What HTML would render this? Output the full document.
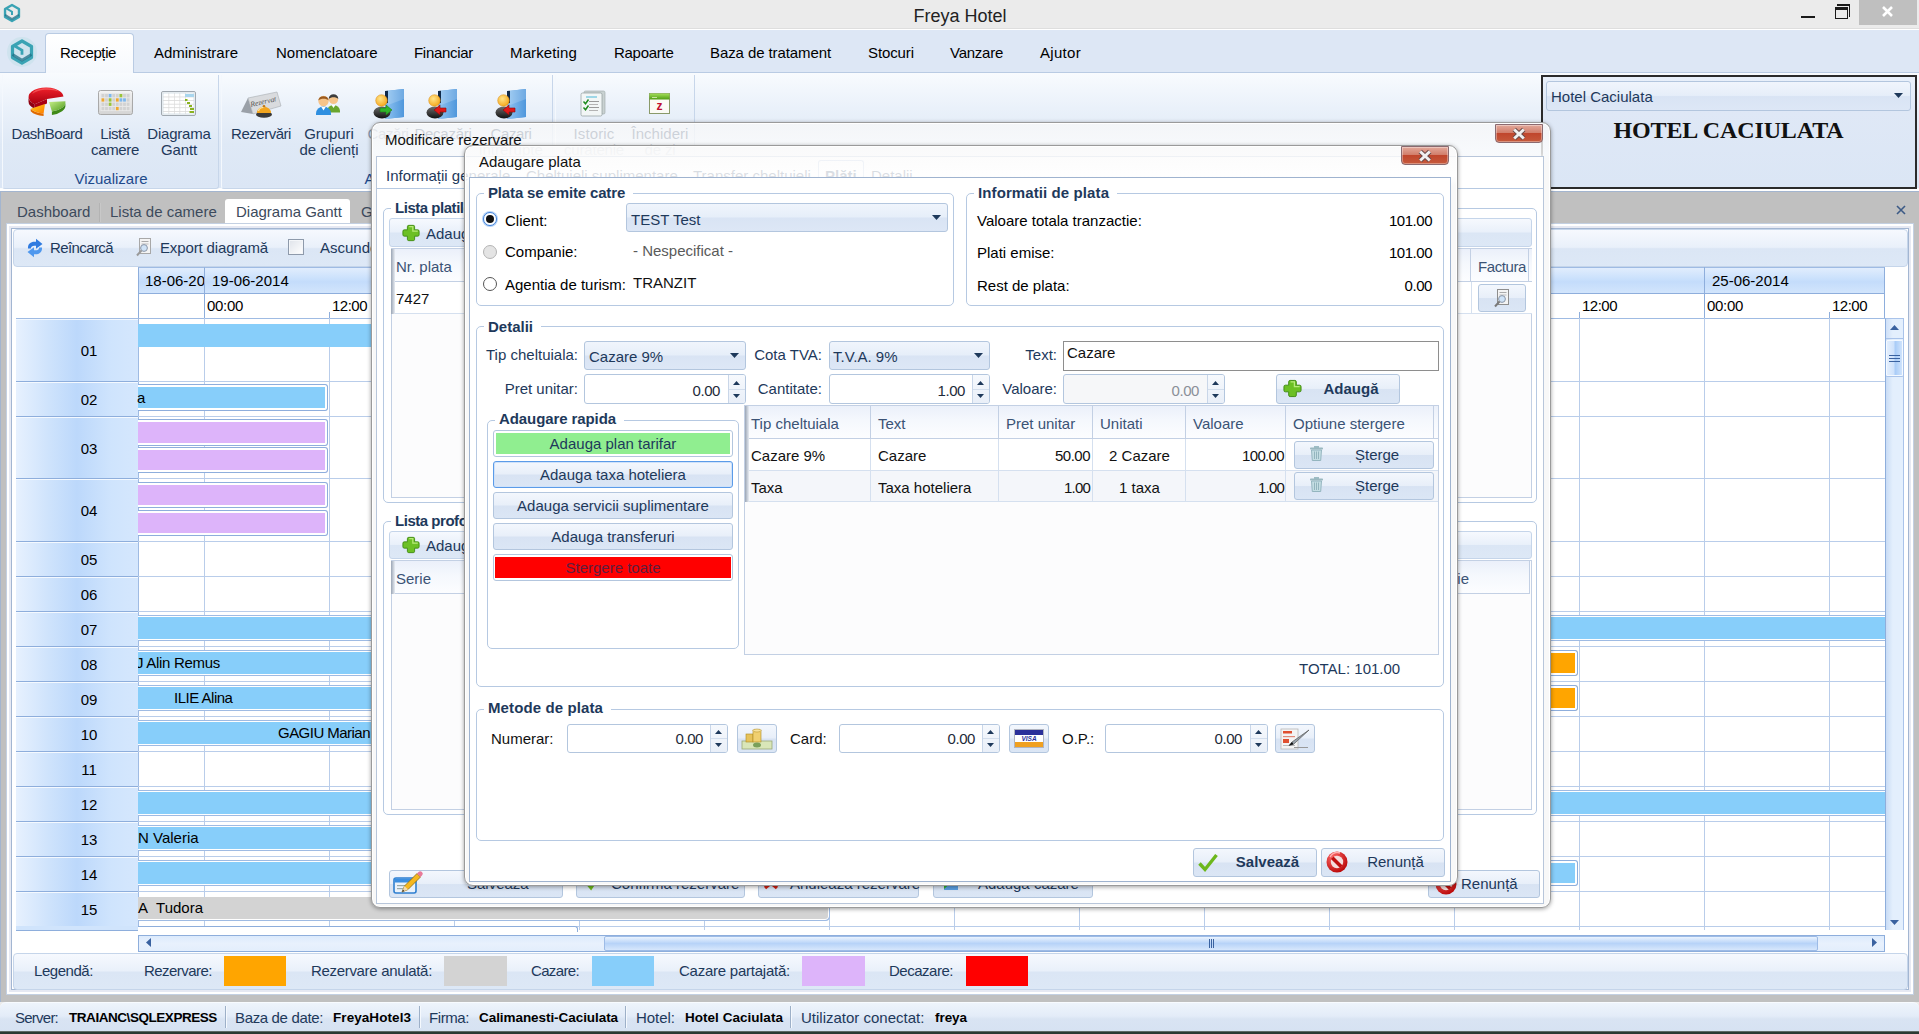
<!DOCTYPE html>
<html lang="ro"><head><meta charset="utf-8"><title>Freya Hotel</title>
<style>
*{box-sizing:border-box;margin:0;padding:0}
html,body{width:1919px;height:1034px;overflow:hidden;background:#ebebeb}
body{font:15px "Liberation Sans",sans-serif;color:#000;position:relative}
.a{position:absolute;white-space:nowrap}
.t{position:absolute;white-space:nowrap;line-height:18px;height:18px}
.nv{color:#1e395b}
.b{font-weight:bold}
.c{text-align:center}
.r{text-align:right}
svg{position:absolute;overflow:visible}
/* title */
#title{left:0;top:0;width:1919px;height:29px;background:#ebebeb}
#menu{left:0;top:29px;width:1919px;height:44px;background:#dde7f5;border-top:1px solid #fff;border-bottom:1px solid #b9cbe3}
#ribbon{left:0;top:73px;width:1919px;height:118px;background:linear-gradient(#f8fbfe 0,#eaf1fa 30%,#dfe9f6 60%,#dbe6f5 97%,#fff 98%)}
.rg{top:75px;height:113px;border:1px solid #c7d6ea;border-left-color:#f4f8fd;border-top:none;border-radius:0 0 3px 3px}
.rl{top:126px;line-height:16px;text-align:center;color:#1e395b}
.gl{top:170px;line-height:18px;text-align:center;color:#1e4a8b}
#gray{left:0;top:191px;width:1919px;height:811px;background:#c0c0c0;border-top:1px solid #a3b5cf;border-left:1px solid #a3b5cf}
.dt{top:202px;height:21px;line-height:19px;color:#3c4a5c}
#panel{left:6px;top:223px;width:1908px;height:772px;background:#fff;border:1px solid #c3d0e2}
.tb{border:1px solid #c5d5ea;border-radius:4px;background:linear-gradient(#f6f9fe 0,#e9f0fa 48%,#dbe6f5 52%,#dde8f6 100%)}
.hd{background:linear-gradient(#e1edfd 0,#c9e0fc 45%,#c4dcfb 55%,#d2e5fc 100%);border:1px solid #8eaedc;border-top-color:#9fbbe3}
.rowl{left:16px;width:122px;background:linear-gradient(90deg,#e7f1fe 0,#d0e4fc 25%,#bcd8fb 50%,#cfe4fd 78%,#d5e7fd 100%);border-top:1px solid #f4f9ff;border-bottom:1px solid #8eaedc;text-align:center}
.gv{width:1px;background:#b4cbea;top:318px;height:612px}
.gh{height:1px;background:#b4cbea;left:138px;width:1747px}
.bar{height:22px}
.bb{border:1px solid #8eaedc;border-radius:3px;padding:0;box-shadow:inset 0 0 0 2px #fff}
.sky{background:#87cefa}.pur{background:#ddb4fa}.org{background:#ffa500}.lgr{background:#d3d3d3}.red{background:#f00}
#status{left:0;top:1002px;width:1919px;height:30px;background:linear-gradient(#eef4fc 0,#e3ecf8 45%,#d9e4f3 55%,#d6e2f2 100%);border-top:1px solid #f8fbff;border-radius:6px 6px 0 0}
.st{top:1009px;color:#1e395b}
.sb{top:1010px;font:bold 13.5px "Liberation Sans",sans-serif;color:#000}
.ss{top:1006px;width:1px;height:22px;background:#9db0c8;border-right:1px solid #f5f9fe;box-sizing:content-box}
/* dialogs */
.glass{border-radius:9px;border:1px solid #9a9a9a;background:linear-gradient(#f4f4f4,#fcfcfc 30px,#f7f7f7);box-shadow:0 1px 4px rgba(0,0,0,.38),inset 0 0 0 1px #fff}
.dlgc{background:#fff;border:1px solid #9fb3cf}
.grp{border:1px solid #b6c9e2;border-radius:5px}
.gt{font-weight:bold;color:#1e395b;background:#fff;padding:0 8px 0 4px;line-height:18px}
.cb{border:1px solid #b3c6de;border-radius:3px;background:linear-gradient(#f0f5fc 0,#e6eef9 48%,#d9e4f4 52%,#dde7f6 100%)}
.in{border:1px solid #b3c6de;border-radius:3px;background:#fff}
.btn{border:1px solid #b3c6de;border-radius:3px;background:linear-gradient(#f3f7fd 0,#e8eff9 48%,#d8e3f3 52%,#dbe6f5 100%);color:#1e395b;text-align:center}
.gh2{background:linear-gradient(#ebf0fa 0,#f5f8fd 45%,#fcfdff 100%);color:#3b5375;border-right:1px solid #c3d0e4;border-bottom:1px solid #c3d0e4}
.xbtn{border:1px solid #8a6a70;border-radius:0 0 4px 4px;background:linear-gradient(#e3a99b 0,#d27f6c 45%,#c0462d 50%,#c65a3c 100%);box-shadow:inset 0 0 0 1px rgba(255,255,255,.35)}
</style></head>
<body>
<div class="a " style="left:0px;top:0px;width:1919px;height:29px;background:#ebebeb"></div>
<svg style="left:1px;top:2px" width="22" height="22" viewBox="0 0 24 24"><path d="M12 3.2 L19.6 7.6 V16.4 L12 20.8 L4.4 16.4 V7.6 Z" fill="none" stroke="#3aa3b4" stroke-width="2.6" stroke-linejoin="round"/><path d="M6.2 7.2 L12 10.6 V14.2" fill="none" stroke="#3aa3b4" stroke-width="2.2"/><path d="M4.4 14 L12 18.6 L19.6 14" fill="none" stroke="#1f6f86" stroke-width="2.2" opacity=".75"/></svg>
<div class="t c" style="left:760px;top:6px;width:400px;font-size:18px;line-height:20px;height:20px;color:#222">Freya Hotel</div>
<div class="a " style="left:1859px;top:0px;width:58px;height:25px;background:#bfbfbf"></div>
<div class="a " style="left:1801px;top:16px;width:14px;height:2px;background:#1a1a1a"></div>
<svg style="left:1835px;top:4px" width="16" height="16" viewBox="0 0 16 16"><rect x="2" y="0" width="13" height="2" fill="#1a1a1a"/><rect x="14" y="0" width="1" height="13" fill="#1a1a1a"/><rect x=".5" y="4.500" width="12" height="10" fill="#ebebeb" stroke="#1a1a1a" stroke-width="1"/><rect x="0" y="3" width="13" height="3" fill="#1a1a1a"/></svg>
<svg style="left:1882px;top:7px" width="11" height="9" viewBox="0 0 11 9"><path d="M1 0L10 9M10 0L1 9" stroke="#fff" stroke-width="2.600"/></svg>
<div class="a " style="left:0px;top:28px;width:1919px;height:1px;background:#dedede"></div>
<div class="a" id="menu"></div>
<svg style="left:7px;top:37px" width="30" height="30" viewBox="0 0 24 24"><circle cx="12" cy="12" r="12" fill="#cfe3ee"/><path d="M12 3.2 L19.6 7.6 V16.4 L12 20.8 L4.4 16.4 V7.6 Z" fill="none" stroke="#3aa3b4" stroke-width="2.6" stroke-linejoin="round"/><path d="M6.2 7.2 L12 10.6 V14.2" fill="none" stroke="#3aa3b4" stroke-width="2.2"/><path d="M4.4 14 L12 18.6 L19.6 14" fill="none" stroke="#1f6f86" stroke-width="2.2" opacity=".75"/></svg>
<div class="a " style="left:45px;top:33px;width:89px;height:40px;background:linear-gradient(#fff,#f6f9fd);border:1px solid #b9cbe3;border-bottom:none;border-radius:4px 4px 0 0"></div>
<div class="t " style="left:60px;top:44px;letter-spacing:-0.40px;">Recepție</div>
<div class="t " style="left:154px;top:44px;letter-spacing:-0.02px;">Administrare</div>
<div class="t " style="left:276px;top:44px;letter-spacing:-0.02px;">Nomenclatoare</div>
<div class="t " style="left:414px;top:44px;letter-spacing:-0.30px;">Financiar</div>
<div class="t " style="left:510px;top:44px;letter-spacing:0.13px;">Marketing</div>
<div class="t " style="left:614px;top:44px;letter-spacing:-0.28px;">Rapoarte</div>
<div class="t " style="left:710px;top:44px;letter-spacing:-0.09px;">Baza de tratament</div>
<div class="t " style="left:868px;top:44px;letter-spacing:-0.10px;">Stocuri</div>
<div class="t " style="left:950px;top:44px;letter-spacing:-0.25px;">Vanzare</div>
<div class="t " style="left:1040px;top:44px;letter-spacing:0.30px;">Ajutor</div>
<div class="a" id="ribbon"></div>
<div class="a rg" style="left:2px;top:75px;width:217px;height:114px;"></div>
<div class="a rg" style="left:221px;top:75px;width:332px;height:114px;"></div>
<div class="a rg" style="left:555px;top:75px;width:140px;height:114px;"></div>
<div class="a rl" style="left:-3px;width:100px"><span style="letter-spacing:-0.45px;">DashBoard</span></div>
<div class="a rl" style="left:65px;width:100px"><span style="letter-spacing:-0.42px;">Listă</span><br><span style="letter-spacing:-0.34px;">camere</span></div>
<div class="a rl" style="left:129px;width:100px"><span style="letter-spacing:-0.22px;">Diagrama</span><br><span style="letter-spacing:-0.14px;">Gantt</span></div>
<div class="a rl" style="left:211px;width:100px"><span style="letter-spacing:-0.49px;">Rezervări</span></div>
<div class="a rl" style="left:279px;width:100px"><span style="letter-spacing:-0.09px;">Grupuri</span><br><span style="letter-spacing:-0.02px;">de clienți</span></div>
<div class="a rl" style="left:338px;width:100px;opacity:0.45"><span style="letter-spacing:-0.39px;">Cazări</span></div>
<div class="a rl" style="left:393px;width:100px"><span style="letter-spacing:-0.27px;">Decazări</span></div>
<div class="a rl" style="left:461px;width:100px"><span style="letter-spacing:-0.39px;">Cazari</span><br><span style="letter-spacing:0.06px;">intrerupte</span></div>
<div class="a rl" style="left:544px;width:100px"><span style="letter-spacing:0.14px;">Istoric</span><br><span style="letter-spacing:-0.19px;">curatenie</span></div>
<div class="a rl" style="left:610px;width:100px"><span style="letter-spacing:0.03px;">Închideri</span><br><span style="letter-spacing:-0.14px;">de zi</span></div>
<div class="a gl" style="left:11px;width:200px">Vizualizare</div>
<div class="a gl" style="left:287px;width:200px">Acțiuni</div>
<svg style="left:0px;top:0px" width="0" height="0" viewBox="0 0 0 0"><defs>
<linearGradient id="gR" x1="0" y1="0" x2="0" y2="1"><stop offset="0" stop-color="#f0202a"/><stop offset="1" stop-color="#a80010"/></linearGradient>
<linearGradient id="gG" x1="0" y1="0" x2="1" y2="1"><stop offset="0" stop-color="#c8ef8a"/><stop offset="1" stop-color="#4c9a1c"/></linearGradient>
<linearGradient id="gY" x1="0" y1="0" x2="1" y2="1"><stop offset="0" stop-color="#ffd21a"/><stop offset="1" stop-color="#ff7a00"/></linearGradient>
<linearGradient id="gD" x1="0" y1="0" x2="1" y2="0"><stop offset="0" stop-color="#86bdee"/><stop offset="1" stop-color="#4f97dc"/></linearGradient>
<radialGradient id="gH" cx=".4" cy=".35" r=".7"><stop offset="0" stop-color="#ffe58a"/><stop offset="1" stop-color="#f5a417"/></radialGradient>
<linearGradient id="gB" x1="0" y1="0" x2="0" y2="1"><stop offset="0" stop-color="#6e6e6e"/><stop offset="1" stop-color="#111"/></linearGradient>
<linearGradient id="gP" x1="0" y1="0" x2="0" y2="1"><stop offset="0" stop-color="#f4f4f4"/><stop offset="1" stop-color="#d4d4d4"/></linearGradient>
<linearGradient id="gX" x1="0" y1="0" x2="0" y2="1"><stop offset="0" stop-color="#a4e05a"/><stop offset="1" stop-color="#4f9d14"/></linearGradient>
<radialGradient id="gN" cx=".35" cy=".3" r=".8"><stop offset="0" stop-color="#ff6a6a"/><stop offset="1" stop-color="#b40000"/></radialGradient>
</defs></svg>
<svg style="left:28px;top:86px" width="38" height="31" viewBox="0 0 38 31"><path d="M.5 11v4.500A17.500 9.500 0 0 0 6.750 22.800v-4.500A17.500 9.500 0 0 1 .5 11Z" fill="#8e0010"/><path d="M6.750 18.300L19 13v4.500L6.750 22.800Z" fill="#a80014"/><path d="M19 13L6.750 18.300A17.500 9.500 0 1 1 35.500 10.500Z" fill="url(#gR)"/><path d="M4 8A15 7.500 0 0 1 31 5.500A20 11 0 0 0 4 8Z" fill="#ff8080" opacity=".5"/><path d="M37.400 15.200v3.500A16.500 9.500 0 0 1 23.900 28.900v-3.500A16.500 9.500 0 0 0 37.400 15.200Z" fill="#3f8a18"/><path d="M21 16L37.400 15.200A16.500 9.500 0 0 1 23.900 25.400Z" fill="url(#gG)"/><path d="M2.700 22.750v2.500A16.500 9.500 0 0 0 15.600 30v-2.500A16.500 9.500 0 0 1 2.700 22.750Z" fill="#e06a00"/><path d="M17 18L15.600 27.500A16.500 9.500 0 0 1 2.700 22.750Z" fill="url(#gY)"/></svg>
<svg style="left:98px;top:90px" width="35" height="25" viewBox="0 0 35 25"><rect x=".5" y=".5" width="34" height="24" rx="2" fill="url(#gP)" stroke="#a9a9a9"/><rect x="2.5" y="3" width="30" height="18" fill="#e9e9e9"/><rect x="3.5" y="4.0" width="2.8" height="3.3" fill="#d2d2d2"/><rect x="7.1" y="4.0" width="2.8" height="3.3" fill="#d2d2d2"/><rect x="10.7" y="4.0" width="2.8" height="3.3" fill="#7db7ee"/><rect x="14.3" y="4.0" width="2.8" height="3.3" fill="#d2d2d2"/><rect x="17.9" y="4.0" width="2.8" height="3.3" fill="#d2d2d2"/><rect x="21.5" y="4.0" width="2.8" height="3.3" fill="#9ac43a"/><rect x="25.1" y="4.0" width="2.8" height="3.3" fill="#d2d2d2"/><rect x="28.7" y="4.0" width="2.8" height="3.3" fill="#d2d2d2"/><rect x="3.5" y="8.3" width="2.8" height="3.3" fill="#f0a830"/><rect x="7.1" y="8.3" width="2.8" height="3.3" fill="#d2d2d2"/><rect x="10.7" y="8.3" width="2.8" height="3.3" fill="#9ac43a"/><rect x="14.3" y="8.3" width="2.8" height="3.3" fill="#d2d2d2"/><rect x="17.9" y="8.3" width="2.8" height="3.3" fill="#f0a830"/><rect x="21.5" y="8.3" width="2.8" height="3.3" fill="#7db7ee"/><rect x="25.1" y="8.3" width="2.8" height="3.3" fill="#7db7ee"/><rect x="28.7" y="8.3" width="2.8" height="3.3" fill="#d2d2d2"/><rect x="3.5" y="12.6" width="2.8" height="3.3" fill="#d2d2d2"/><rect x="7.1" y="12.6" width="2.8" height="3.3" fill="#d2d2d2"/><rect x="10.7" y="12.6" width="2.8" height="3.3" fill="#9ac43a"/><rect x="14.3" y="12.6" width="2.8" height="3.3" fill="#d2d2d2"/><rect x="17.9" y="12.6" width="2.8" height="3.3" fill="#d2d2d2"/><rect x="21.5" y="12.6" width="2.8" height="3.3" fill="#d2d2d2"/><rect x="25.1" y="12.6" width="2.8" height="3.3" fill="#d2d2d2"/><rect x="28.7" y="12.6" width="2.8" height="3.3" fill="#d2d2d2"/><rect x="3.5" y="16.9" width="2.8" height="3.3" fill="#d2d2d2"/><rect x="7.1" y="16.9" width="2.8" height="3.3" fill="#d2d2d2"/><rect x="10.7" y="16.9" width="2.8" height="3.3" fill="#d2d2d2"/><rect x="14.3" y="16.9" width="2.8" height="3.3" fill="#d2d2d2"/><rect x="17.9" y="16.9" width="2.8" height="3.3" fill="#f0a830"/><rect x="21.5" y="16.9" width="2.8" height="3.3" fill="#d2d2d2"/><rect x="25.1" y="16.9" width="2.8" height="3.3" fill="#d2d2d2"/><rect x="28.7" y="16.9" width="2.8" height="3.3" fill="#d2d2d2"/></svg>
<svg style="left:161px;top:91px" width="35" height="25" viewBox="0 0 35 25"><rect x=".5" y=".5" width="34" height="24" rx="1.5" fill="#f7f7f7" stroke="#a0a8b0"/><rect x="2" y="2" width="31" height="21" fill="#fff" stroke="#bcd0dc" stroke-width=".6"/><rect x="2" y="5.6" width="31" height=".7" fill="#d4d4d4"/><rect x="2" y="9.2" width="31" height=".7" fill="#d4d4d4"/><rect x="2" y="12.8" width="31" height=".7" fill="#d4d4d4"/><rect x="2" y="16.4" width="31" height=".7" fill="#d4d4d4"/><rect x="2" y="20.0" width="31" height=".7" fill="#d4d4d4"/><rect x="7.5" y="2" width=".7" height="21" fill="#dcdcdc"/><rect x="13.0" y="2" width=".7" height="21" fill="#dcdcdc"/><rect x="18.5" y="2" width=".7" height="21" fill="#dcdcdc"/><rect x="24.0" y="2" width=".7" height="21" fill="#dcdcdc"/><rect x="24" y="3" width="9" height="3" fill="#a9d6ee"/><rect x="24" y="8" width="2.5" height="2" fill="#8ab320"/><rect x="26" y="11" width="3" height="2" fill="#8ab320"/><rect x="28" y="14" width="3" height="2" fill="#8ab320"/><rect x="29" y="17" width="4" height="2" fill="#8ab320"/><rect x="28.5" y="20" width="4.5" height="2" fill="#8ab320"/></svg>
<svg style="left:241px;top:92px" width="40" height="26" viewBox="0 0 40 26"><path d="M0 20L7 6L12 22Z" fill="#9aa0a8"/><path d="M7 6L36 0L40 14L12 22Z" fill="#d9dbde" stroke="#a8acb2" stroke-width=".6"/><text x="10" y="15" font-family="Liberation Serif,serif" font-style="italic" font-size="7.5" fill="#555" transform="rotate(-13 10 15)">Rezervat</text><ellipse cx="23" cy="22.5" rx="8" ry="3.3" fill="#3a3a3a"/><path d="M16 21a7 6.2 0 0 1 14 0Z" fill="#f2a51e"/><path d="M17.5 19a5.5 4.5 0 0 1 6-3.6" stroke="#ffe39a" stroke-width="1.2" fill="none"/><circle cx="23" cy="14.2" r="1.3" fill="#c47a10"/></svg>
<svg style="left:315px;top:91px" width="27" height="24" viewBox="0 0 27 24"><path d="M12 20a6.5 6 0 0 1 13 0v1.5H12Z" fill="#6aa62e"/><circle cx="18.5" cy="8.5" r="4.6" fill="#f6c48a"/><path d="M13.7 8a4.8 4.8 0 0 1 9.6 0c-2 -2 -7 -2.4-9.6 0Z" fill="#3d3d3d"/><path d="M16.5 14l2 3 2-3Z" fill="#fff"/><path d="M1 22.5a7.5 7 0 0 1 15 0v1.5H1Z" fill="#2f8fe0"/><circle cx="8.5" cy="10" r="5.2" fill="#f6c48a"/><path d="M3.2 9.6a5.4 5.4 0 0 1 10.6 0c-2.4-2.6-8-2.6-10.6 0Z" fill="#9a5a1e"/><path d="M6.3 16l2.2 3.5 2.2-3.5Z" fill="#fff"/></svg>
<svg style="left:373px;top:89px" width="33" height="30" viewBox="0 0 33 30"><path d="M12 2L31 0V28L12 30Z" fill="url(#gD)"/><path d="M12 2L15 1.700V14L12 14Z" fill="#0f2a4a"/><path d="M15 1.700L31 0V28L15 29.700Z" fill="url(#gD)"/><path d="M15 1.700L31 0V10L15 16Z" fill="#fff" opacity=".18"/><ellipse cx="9" cy="23.500" rx="8.500" ry="6" fill="url(#gB)"/><circle cx="8.500" cy="11.500" r="5.800" fill="url(#gH)" stroke="#d98a10" stroke-width=".5"/><path d="M7 19h6v-3l6 5-6 5v-3H7z" fill="#2fb52a" stroke="#1c7a18" stroke-width=".6"/></svg>
<svg style="left:426px;top:89px" width="33" height="30" viewBox="0 0 33 30"><path d="M12 2L31 0V28L12 30Z" fill="url(#gD)"/><path d="M12 2L15 1.700V14L12 14Z" fill="#0f2a4a"/><path d="M15 1.700L31 0V28L15 29.700Z" fill="url(#gD)"/><path d="M15 1.700L31 0V10L15 16Z" fill="#fff" opacity=".18"/><ellipse cx="9" cy="23.500" rx="8.500" ry="6" fill="url(#gB)"/><circle cx="8.500" cy="11.500" r="5.800" fill="url(#gH)" stroke="#d98a10" stroke-width=".5"/><path d="M20 19h-6v-3l-6 5 6 5v-3h6z" fill="#e01818" stroke="#8a0c0c" stroke-width=".6"/></svg>
<svg style="left:495px;top:89px" width="33" height="30" viewBox="0 0 33 30"><path d="M12 2L31 0V28L12 30Z" fill="url(#gD)"/><path d="M12 2L15 1.700V14L12 14Z" fill="#0f2a4a"/><path d="M15 1.700L31 0V28L15 29.700Z" fill="url(#gD)"/><path d="M15 1.700L31 0V10L15 16Z" fill="#fff" opacity=".18"/><ellipse cx="9" cy="23.500" rx="8.500" ry="6" fill="url(#gB)"/><circle cx="8.500" cy="11.500" r="5.800" fill="url(#gH)" stroke="#d98a10" stroke-width=".5"/><path d="M20 19h-6v-3l-6 5 6 5v-3h6z" fill="#e01818" stroke="#8a0c0c" stroke-width=".6"/></svg>
<svg style="left:580px;top:90px" width="26" height="27" viewBox="0 0 26 27"><rect x="4" y="1" width="21" height="23" rx="1.5" fill="#c9d2d2" stroke="#9aa6a6" stroke-width=".6"/><rect x="1" y="3" width="21" height="23" rx="1.5" fill="#f2f6f6" stroke="#8f9b9b" stroke-width=".7"/><rect x="6" y="6.5" width="11" height="1" fill="#4ab8d8"/><rect x="9" y="11" width="10" height="1" fill="#9a9a9a"/><rect x="9" y="14" width="9" height="1" fill="#b4b4b4"/><rect x="9" y="17" width="10" height="1" fill="#9a9a9a"/><rect x="9" y="20" width="9" height="1" fill="#b4b4b4"/><path d="M3.5 11.5l2 2.2 3-4.2" stroke="#1d8a1d" stroke-width="1.5" fill="none"/><path d="M3.5 17.5l2 2.2 3-4.2" stroke="#1d8a1d" stroke-width="1.5" fill="none"/></svg>
<svg style="left:649px;top:93px" width="21" height="21" viewBox="0 0 21 21"><rect x=".5" y=".5" width="20" height="20" fill="#fbfbf6" stroke="#8a9a6a"/><rect x=".5" y=".5" width="20" height="6" fill="url(#gX)"/><rect x="3" y="4" width="5" height=".8" fill="#dff0c0"/><text x="10.5" y="17" text-anchor="middle" font-family="Liberation Sans,sans-serif" font-weight="bold" font-size="12" fill="#c01030">z</text></svg>
<div class="a " style="left:1541px;top:75px;width:376px;height:114px;border:2px solid #2b2b2b;background:linear-gradient(#e9f0fa,#dfe8f6 30%,#dbe6f5)"></div>
<div class="a cb" style="left:1546px;top:81px;width:365px;height:30px;"></div>
<div class="t nv" style="left:1551px;top:88px;">Hotel Caciulata</div>
<svg style="left:1894px;top:93px" width="9" height="5"><path d="M0 0H9L4.5 5Z" fill="#1e395b"/></svg>
<div class="t c" style="left:1541px;top:117px;width:375px;font:bold 24px/26px Liberation Serif,serif;height:26px;color:#111;letter-spacing:-0.12px;">HOTEL CACIULATA</div>
<div class="a" id="gray"></div>
<div class="a " style="left:225px;top:199px;width:125px;height:25px;background:#fff;border-radius:3px 3px 0 0"></div>
<div class="t dt" style="left:17px;top:202px;">Dashboard</div>
<div class="a " style="left:99px;top:203px;width:1px;height:19px;background:#b3b3b3;border-right:1px solid #c8c8c8;box-sizing:content-box"></div>
<div class="t dt" style="left:110px;top:202px;">Lista de camere</div>
<div class="t dt" style="left:236px;top:202px;">Diagrama Gantt</div>
<div class="t dt" style="left:361px;top:202px;">Grupuri</div>
<svg style="left:1896px;top:205px" width="10" height="10"><path d="M1 1L9 9M9 1L1 9" stroke="#3c5a86" stroke-width="1.6"/></svg>
<div class="a" id="panel"></div>
<div class="a " style="left:9px;top:226px;width:1902px;height:766px;border:2px solid #e6e9f3"></div>
<div class="a " style="left:11px;top:228px;width:1898px;height:762px;border:1px solid #a3b6d2"></div>
<div class="a tb" style="left:13px;top:229px;width:1895px;height:38px;"></div>
<svg style="left:27px;top:238px" width="16" height="20" viewBox="0 0 16 20"><path d="M1 10.500C.5 5 5 3 9 3.800V.8L15.500 6L9 10.800V7.800C6 7.200 4 8.200 3.800 10.500Z" fill="#2f7be0"/><path d="M15 9.500C15.500 15 11 17 7 16.200V19.200L.5 14L7 9.200V12.200C10 12.800 12 11.800 12.200 9.500Z" fill="#4f98ee"/></svg>
<div class="t nv" style="left:50px;top:239px;letter-spacing:-0.60px;">Reîncarcă</div>
<svg style="left:136px;top:238px" width="16" height="19" viewBox="0 0 16 19"><rect x="3.5" y=".5" width="11" height="15" fill="#f4f4f4" stroke="#a8a8a8"/><rect x="5.5" y="3" width="7" height="1" fill="#aaa"/><rect x="5.5" y="5.5" width="7" height="1" fill="#bbb"/><circle cx="8" cy="10" r="3.4" fill="#cfe3f7" stroke="#8a96a8" stroke-width="1"/><path d="M5.5 12.5L1 17.5" stroke="#9a9a9a" stroke-width="2"/></svg>
<div class="t nv" style="left:160px;top:239px;letter-spacing:-0.14px;">Export diagramă</div>
<div class="a " style="left:288px;top:239px;width:16px;height:16px;border:1px solid #8e9aab;background:linear-gradient(135deg,#dfe3ea,#fff);box-shadow:inset 0 0 0 1px #f4f6f9"></div>
<div class="t nv" style="left:320px;top:239px;">Ascunde</div>
<div class="a hd" style="left:138px;top:267px;width:67px;height:27px;"></div>
<div class="a hd" style="left:204px;top:267px;width:1681px;height:27px;"></div>
<div class="t " style="left:145px;top:272px;width:59px;overflow:hidden">18-06-20</div>
<div class="t " style="left:212px;top:272px;">19-06-2014</div>
<div class="a " style="left:1704px;top:267px;width:1px;height:27px;background:#8eaedc"></div>
<div class="t " style="left:1712px;top:272px;">25-06-2014</div>
<div class="a " style="left:138px;top:293px;width:1px;height:25px;background:#8eaedc"></div>
<div class="a " style="left:1884px;top:293px;width:1px;height:25px;background:#8eaedc"></div>
<div class="a " style="left:16px;top:318px;width:1869px;height:1px;background:#9fbbe3"></div>
<div class="a " style="left:204px;top:293px;width:1px;height:25px;background:#8eaedc"></div>
<div class="t " style="left:207px;top:297px;letter-spacing:-0.31px;">00:00</div>
<div class="a " style="left:329px;top:312px;width:1px;height:6px;background:#8eaedc"></div>
<div class="t " style="left:332px;top:297px;letter-spacing:-0.51px;">12:00</div>
<div class="a " style="left:454px;top:293px;width:1px;height:25px;background:#8eaedc"></div>
<div class="a " style="left:579px;top:312px;width:1px;height:6px;background:#8eaedc"></div>
<div class="a " style="left:704px;top:293px;width:1px;height:25px;background:#8eaedc"></div>
<div class="a " style="left:829px;top:312px;width:1px;height:6px;background:#8eaedc"></div>
<div class="a " style="left:954px;top:293px;width:1px;height:25px;background:#8eaedc"></div>
<div class="a " style="left:1079px;top:312px;width:1px;height:6px;background:#8eaedc"></div>
<div class="a " style="left:1204px;top:293px;width:1px;height:25px;background:#8eaedc"></div>
<div class="a " style="left:1329px;top:312px;width:1px;height:6px;background:#8eaedc"></div>
<div class="a " style="left:1454px;top:293px;width:1px;height:25px;background:#8eaedc"></div>
<div class="a " style="left:1579px;top:312px;width:1px;height:6px;background:#8eaedc"></div>
<div class="t " style="left:1582px;top:297px;letter-spacing:-0.51px;">12:00</div>
<div class="a " style="left:1704px;top:293px;width:1px;height:25px;background:#8eaedc"></div>
<div class="t " style="left:1707px;top:297px;letter-spacing:-0.31px;">00:00</div>
<div class="a " style="left:1829px;top:312px;width:1px;height:6px;background:#8eaedc"></div>
<div class="t " style="left:1832px;top:297px;letter-spacing:-0.51px;">12:00</div>
<div class="a " style="left:204px;top:318px;width:1px;height:612px;background:#b9cdea"></div>
<div class="a " style="left:329px;top:318px;width:1px;height:612px;background:#b9cdea"></div>
<div class="a " style="left:454px;top:318px;width:1px;height:612px;background:#b9cdea"></div>
<div class="a " style="left:579px;top:318px;width:1px;height:612px;background:#b9cdea"></div>
<div class="a " style="left:704px;top:318px;width:1px;height:612px;background:#b9cdea"></div>
<div class="a " style="left:829px;top:318px;width:1px;height:612px;background:#b9cdea"></div>
<div class="a " style="left:954px;top:318px;width:1px;height:612px;background:#b9cdea"></div>
<div class="a " style="left:1079px;top:318px;width:1px;height:612px;background:#b9cdea"></div>
<div class="a " style="left:1204px;top:318px;width:1px;height:612px;background:#b9cdea"></div>
<div class="a " style="left:1329px;top:318px;width:1px;height:612px;background:#b9cdea"></div>
<div class="a " style="left:1454px;top:318px;width:1px;height:612px;background:#b9cdea"></div>
<div class="a " style="left:1579px;top:318px;width:1px;height:612px;background:#b9cdea"></div>
<div class="a " style="left:1704px;top:318px;width:1px;height:612px;background:#b9cdea"></div>
<div class="a " style="left:1829px;top:318px;width:1px;height:612px;background:#b9cdea"></div>
<div class="a " style="left:138px;top:318px;width:1px;height:612px;background:#9fbbe3"></div>
<div class="a " style="left:138px;top:381px;width:1747px;height:1px;background:#b9cdea"></div>
<div class="a " style="left:138px;top:416px;width:1747px;height:1px;background:#b9cdea"></div>
<div class="a " style="left:138px;top:478px;width:1747px;height:1px;background:#b9cdea"></div>
<div class="a " style="left:138px;top:541px;width:1747px;height:1px;background:#b9cdea"></div>
<div class="a " style="left:138px;top:576px;width:1747px;height:1px;background:#b9cdea"></div>
<div class="a " style="left:138px;top:611px;width:1747px;height:1px;background:#b9cdea"></div>
<div class="a " style="left:138px;top:646px;width:1747px;height:1px;background:#b9cdea"></div>
<div class="a " style="left:138px;top:681px;width:1747px;height:1px;background:#b9cdea"></div>
<div class="a " style="left:138px;top:716px;width:1747px;height:1px;background:#b9cdea"></div>
<div class="a " style="left:138px;top:751px;width:1747px;height:1px;background:#b9cdea"></div>
<div class="a " style="left:138px;top:786px;width:1747px;height:1px;background:#b9cdea"></div>
<div class="a " style="left:138px;top:821px;width:1747px;height:1px;background:#b9cdea"></div>
<div class="a " style="left:138px;top:856px;width:1747px;height:1px;background:#b9cdea"></div>
<div class="a " style="left:138px;top:891px;width:1747px;height:1px;background:#b9cdea"></div>
<div class="a " style="left:138px;top:926px;width:1747px;height:1px;background:#b9cdea"></div>
<div class="a rowl" style="top:319px;height:63px;line-height:62px;padding-left:24px">01</div>
<div class="a rowl" style="top:382px;height:35px;line-height:34px;padding-left:24px">02</div>
<div class="a rowl" style="top:417px;height:62px;line-height:61px;padding-left:24px">03</div>
<div class="a rowl" style="top:479px;height:63px;line-height:62px;padding-left:24px">04</div>
<div class="a rowl" style="top:542px;height:35px;line-height:34px;padding-left:24px">05</div>
<div class="a rowl" style="top:577px;height:35px;line-height:34px;padding-left:24px">06</div>
<div class="a rowl" style="top:612px;height:35px;line-height:34px;padding-left:24px">07</div>
<div class="a rowl" style="top:647px;height:35px;line-height:34px;padding-left:24px">08</div>
<div class="a rowl" style="top:682px;height:35px;line-height:34px;padding-left:24px">09</div>
<div class="a rowl" style="top:717px;height:35px;line-height:34px;padding-left:24px">10</div>
<div class="a rowl" style="top:752px;height:35px;line-height:34px;padding-left:24px">11</div>
<div class="a rowl" style="top:787px;height:35px;line-height:34px;padding-left:24px">12</div>
<div class="a rowl" style="top:822px;height:35px;line-height:34px;padding-left:24px">13</div>
<div class="a rowl" style="top:857px;height:35px;line-height:34px;padding-left:24px">14</div>
<div class="a rowl" style="top:892px;height:35px;line-height:34px;padding-left:24px">15</div>
<div class="a " style="left:16px;top:926px;width:122px;height:5px;background:#d0e4fc;border-bottom:1px solid #8eaedc"></div>
<div class="a sky" style="left:138px;top:324px;width:1100px;height:23px;"></div>
<div class="a bb sky" style="left:138px;top:384px;width:190px;height:27px;border-left:none;border-radius:0 3px 3px 0;box-shadow:inset 0 2px 0 #fff,inset 0 -2px 0 #fff,inset -2px 0 0 #fff"><span class="a" style="left:-1px;top:4px;line-height:18px">a</span></div>
<div class="a bb pur" style="left:138px;top:419px;width:190px;height:27px;border-left:none;border-radius:0 3px 3px 0;box-shadow:inset 0 2px 0 #fff,inset 0 -2px 0 #fff,inset -2px 0 0 #fff"></div>
<div class="a bb pur" style="left:138px;top:447px;width:190px;height:26px;border-left:none;border-radius:0 3px 3px 0;box-shadow:inset 0 2px 0 #fff,inset 0 -2px 0 #fff,inset -2px 0 0 #fff"></div>
<div class="a bb pur" style="left:138px;top:482px;width:190px;height:26px;border-left:none;border-radius:0 3px 3px 0;box-shadow:inset 0 2px 0 #fff,inset 0 -2px 0 #fff,inset -2px 0 0 #fff"></div>
<div class="a bb pur" style="left:138px;top:510px;width:190px;height:26px;border-left:none;border-radius:0 3px 3px 0;box-shadow:inset 0 2px 0 #fff,inset 0 -2px 0 #fff,inset -2px 0 0 #fff"></div>
<div class="a sky" style="left:138px;top:617px;width:1747px;height:22px;box-shadow:0 -1px 0 #fff,0 1px 0 #fff,0 2px 0 #9fbbe3,0 -2px 0 #9fbbe3"></div>
<div class="a sky" style="left:138px;top:792px;width:1747px;height:22px;box-shadow:0 -1px 0 #fff,0 1px 0 #fff,0 2px 0 #9fbbe3,0 -2px 0 #9fbbe3"></div>
<div class="a sky" style="left:138px;top:652px;width:1403px;height:22px;box-shadow:0 -1px 0 #fff,0 1px 0 #fff,0 2px 0 #9fbbe3,0 -2px 0 #9fbbe3"></div>
<div class="a sky" style="left:138px;top:687px;width:1403px;height:22px;box-shadow:0 -1px 0 #fff,0 1px 0 #fff,0 2px 0 #9fbbe3,0 -2px 0 #9fbbe3"></div>
<div class="a sky" style="left:138px;top:722px;width:1162px;height:22px;box-shadow:0 -1px 0 #fff,0 1px 0 #fff,0 2px 0 #9fbbe3,0 -2px 0 #9fbbe3"></div>
<div class="a sky" style="left:138px;top:827px;width:1162px;height:22px;box-shadow:0 -1px 0 #fff,0 1px 0 #fff,0 2px 0 #9fbbe3,0 -2px 0 #9fbbe3"></div>
<div class="a sky" style="left:138px;top:862px;width:1403px;height:22px;box-shadow:0 -1px 0 #fff,0 1px 0 #fff,0 2px 0 #9fbbe3,0 -2px 0 #9fbbe3"></div>
<div class="a " style="left:138px;top:654px;width:200px;height:20px;overflow:hidden"><div class="t " style="left:-2px;top:0px;letter-spacing:-0.29px;">J Alin Remus</div>
</div>
<div class="t " style="left:174px;top:689px;letter-spacing:-0.49px;">ILIE Alina</div>
<div class="t " style="left:278px;top:724px;letter-spacing:-0.53px;">GAGIU Marian</div>
<div class="t " style="left:138px;top:829px;">N Valeria</div>
<div class="a lgr" style="left:138px;top:897px;width:690px;height:22px;box-shadow:0 1px 0 #fff,1px 0 0 #fff,1px 2px 0 #9fbbe3,2px 1px 0 #9fbbe3;border-radius:0 0 3px 0"></div>
<div class="t " style="left:138px;top:899px;">A&nbsp; Tudora</div>
<div class="a " style="left:138px;top:926px;width:440px;height:6px;border:1px solid #8eaedc;border-left:none;border-bottom:none;border-radius:0 3px 0 0;background:#fff"></div>
<div class="a bb org" style="left:1540px;top:650px;width:38px;height:26px;border-left:none;border-radius:0 3px 3px 0;box-shadow:inset 0 2px 0 #fff,inset 0 -2px 0 #fff,inset -2px 0 0 #fff"></div>
<div class="a bb org" style="left:1540px;top:685px;width:38px;height:26px;border-left:none;border-radius:0 3px 3px 0;box-shadow:inset 0 2px 0 #fff,inset 0 -2px 0 #fff,inset -2px 0 0 #fff"></div>
<div class="a bb sky" style="left:1540px;top:860px;width:38px;height:26px;border-left:none;border-radius:0 3px 3px 0;box-shadow:inset 0 2px 0 #fff,inset 0 -2px 0 #fff,inset -2px 0 0 #fff"></div>
<div class="a " style="left:1885px;top:318px;width:19px;height:612px;background:linear-gradient(90deg,#c9dcf5,#e3effd 40%,#e3effd);border-left:1px solid #8eaedc;border-right:1px solid #a9c3ea;border-top:1px solid #a9c3ea"></div>
<div class="a " style="left:1886px;top:319px;width:17px;height:20px;background:linear-gradient(90deg,#cfe0f8,#e3effd 40%);border-bottom:1px solid #a9c3ea"></div>
<svg style="left:1890px;top:325px" width="9" height="5"><path d="M0 5H9L4.5 0Z" fill="#3a62a0"/></svg>
<div class="a " style="left:1886px;top:340px;width:17px;height:36px;background:linear-gradient(90deg,#e4effd,#cfe2fb 45%,#a9ccf7 55%,#cfe3fc);border:1px solid #f4f9ff;border-radius:1px;box-shadow:0 1px 0 #a9c3ea"></div>
<div class="a " style="left:1889px;top:355px;width:11px;height:1px;background:#3a62a0"></div>
<div class="a " style="left:1889px;top:358px;width:11px;height:1px;background:#3a62a0"></div>
<div class="a " style="left:1889px;top:361px;width:11px;height:1px;background:#3a62a0"></div>
<svg style="left:1890px;top:920px" width="9" height="5"><path d="M0 0H9L4.5 5Z" fill="#3a62a0"/></svg>
<div class="a " style="left:138px;top:935px;width:1747px;height:17px;background:linear-gradient(#dceafc,#e8f1fd 50%,#e3eefc);border:1px solid #8eaedc"></div>
<div class="a " style="left:604px;top:936px;width:1214px;height:15px;background:linear-gradient(#eaf3fe,#b7d3f8 50%,#d7e7fc);border:1px solid #9dbbe6;border-radius:2px"></div>
<div class="a " style="left:1209px;top:939px;width:1px;height:9px;background:#3a62a0"></div>
<div class="a " style="left:1211px;top:939px;width:1px;height:9px;background:#3a62a0"></div>
<div class="a " style="left:1213px;top:939px;width:1px;height:9px;background:#3a62a0"></div>
<svg style="left:146px;top:938px" width="5" height="9"><path d="M5 0V9L0 4.5Z" fill="#3a62a0"/></svg>
<svg style="left:1872px;top:938px" width="5" height="9"><path d="M0 0V9L5 4.5Z" fill="#3a62a0"/></svg>
<div class="a tb" style="left:13px;top:953px;width:1895px;height:37px;"></div>
<div class="t nv" style="left:34px;top:962px;letter-spacing:-0.45px;">Legendă:</div>
<div class="t nv" style="left:144px;top:962px;letter-spacing:-0.54px;">Rezervare:</div>
<div class="a org" style="left:224px;top:956px;width:62px;height:30px;"></div>
<div class="t nv" style="left:311px;top:962px;letter-spacing:-0.32px;">Rezervare anulată:</div>
<div class="a lgr" style="left:444px;top:956px;width:63px;height:30px;"></div>
<div class="t nv" style="left:531px;top:962px;letter-spacing:-0.65px;">Cazare:</div>
<div class="a sky" style="left:592px;top:956px;width:62px;height:30px;"></div>
<div class="t nv" style="left:679px;top:962px;letter-spacing:-0.24px;">Cazare partajată:</div>
<div class="a pur" style="left:802px;top:956px;width:63px;height:30px;"></div>
<div class="t nv" style="left:889px;top:962px;letter-spacing:-0.48px;">Decazare:</div>
<div class="a red" style="left:966px;top:956px;width:62px;height:30px;"></div>
<div class="a" id="status"></div>
<div class="a " style="left:0px;top:1031px;width:1919px;height:3px;background:linear-gradient(#7d8783 0,#2c3a33 45%)"></div>
<div class="t st" style="left:15px;top:1009px;letter-spacing:-0.76px;">Server:</div>
<div class="t sb" style="left:69px;top:1010px;letter-spacing:-0.45px;">TRAIANC\SQLEXPRESS</div>
<div class="a ss" style="left:225px;top:1006px;width:1px;height:22px;"></div>
<div class="t st" style="left:235px;top:1009px;letter-spacing:-0.35px;">Baza de date:</div>
<div class="t sb" style="left:333px;top:1010px;letter-spacing:0.07px;">FreyaHotel3</div>
<div class="a ss" style="left:419px;top:1006px;width:1px;height:22px;"></div>
<div class="t st" style="left:429px;top:1009px;letter-spacing:-0.42px;">Firma:</div>
<div class="t sb" style="left:479px;top:1010px;letter-spacing:-0.06px;">Calimanesti-Caciulata</div>
<div class="a ss" style="left:625px;top:1006px;width:1px;height:22px;"></div>
<div class="t st" style="left:636px;top:1009px;letter-spacing:-0.03px;">Hotel:</div>
<div class="t sb" style="left:685px;top:1010px;letter-spacing:0.03px;">Hotel Caciulata</div>
<div class="a ss" style="left:790px;top:1006px;width:1px;height:22px;"></div>
<div class="t st" style="left:801px;top:1009px;">Utilizator conectat:</div>
<div class="t sb" style="left:935px;top:1010px;letter-spacing:-0.05px;">freya</div>
<div class="a glass" style="left:371px;top:122px;width:1180px;height:786px;background:linear-gradient(rgba(248,248,248,.78),rgba(254,254,254,.8) 30px,#f8f8f8 40px)"></div>
<div class="t " style="left:385px;top:131px;color:#111">Modificare rezervare</div>
<div class="a xbtn" style="left:1495px;top:124px;width:48px;height:19px;"></div>
<svg style="left:1512px;top:128px" width="14" height="12" viewBox="0 0 14 12"><path d="M2.200 1.500L11.800 10.500M11.800 1.500L2.200 10.500" stroke="#6a4a48" stroke-width="4.800"/><path d="M2.200 1.500L11.800 10.500M11.800 1.500L2.200 10.500" stroke="#f1f1f1" stroke-width="3"/></svg>
<div class="a dlgc" style="left:376px;top:156px;width:1168px;height:748px;border-color:#b8c6da"></div>
<div class="t nv" style="left:386px;top:167px;">Informații generale</div>
<div class="t nv" style="left:526px;top:167px;">Cheltuieli suplimentare</div>
<div class="t nv" style="left:693px;top:167px;">Transfer cheltuieli</div>
<div class="a " style="left:818px;top:160px;width:46px;height:29px;border:1px solid #b6c9e2;border-bottom:none;border-radius:3px 3px 0 0;background:#fff"></div>
<div class="t nv b" style="left:825px;top:167px;">Plăți</div>
<div class="t nv" style="left:871px;top:167px;">Detalii</div>
<div class="a " style="left:377px;top:188px;width:1166px;height:1px;background:#b6c9e2"></div>
<div class="a grp" style="left:383px;top:208px;width:1154px;height:295px;"></div>
<div class="t gt" style="left:391px;top:199px;letter-spacing:-0.47px;">Lista platilor</div>
<div class="a tb" style="left:389px;top:218px;width:1143px;height:29px;border-radius:3px"></div>
<svg style="left:402px;top:224px" width="18" height="18" viewBox="0 0 19 20"><path d="M7 1.5h5a1.5 1.5 0 0 1 1.5 1.5v3.5H17a1.5 1.5 0 0 1 1.5 1.5v4a1.5 1.5 0 0 1-1.5 1.5h-3.500V17a1.5 1.5 0 0 1-1.5 1.500h-5A1.5 1.5 0 0 1 5.500 17v-3.500H2A1.5 1.5 0 0 1 .5 12V8A1.5 1.5 0 0 1 2 6.500h3.500V3A1.5 1.5 0 0 1 7 1.500Z" fill="#6cc024" stroke="#3f8a12" stroke-width="1"/><path d="M7.500 3h4v5h5.500" fill="none" stroke="#b8ea7a" stroke-width="1.300"/></svg>
<div class="t nv" style="left:426px;top:225px;">Adauga</div>
<div class="a " style="left:391px;top:248px;width:1141px;height:250px;border:1px solid #c3d0e4;background:#fcfcfd"></div>
<div class="a " style="left:391px;top:249px;width:4px;height:65px;background:linear-gradient(90deg,#9aa5b5,#e8ecf2)"></div>
<div class="a gh2" style="left:395px;top:249px;width:1076px;height:33px;"></div>
<div class="t " style="left:396px;top:258px;color:#3b5375">Nr. plata</div>
<div class="a gh2" style="left:1471px;top:249px;width:58px;height:33px;"></div>
<div class="t " style="left:1478px;top:258px;color:#3b5375;letter-spacing:-0.41px;">Factura</div>
<div class="a gh2" style="left:1529px;top:249px;width:3px;height:33px;border-right:none"></div>
<div class="a " style="left:395px;top:282px;width:1137px;height:32px;background:#fff;border-bottom:1px solid #d5e0ef"></div>
<div class="a " style="left:1471px;top:282px;width:1px;height:32px;background:#d5e0ef"></div>
<div class="t " style="left:396px;top:290px;color:#111">7427</div>
<div class="a btn" style="left:1478px;top:284px;width:48px;height:28px;"></div>
<svg style="left:1494px;top:289px" width="16" height="19" viewBox="0 0 16 19"><rect x="3.500" y=".5" width="11" height="15" fill="#f4f4f4" stroke="#8e8e8e"/><rect x="5.500" y="3" width="7" height="1" fill="#aaa"/><rect x="5.500" y="5.500" width="7" height="1" fill="#bbb"/><circle cx="8" cy="10" r="3.400" fill="#cfe3f7" stroke="#8a96a8" stroke-width="1"/><path d="M5.500 12.500L1 17.500" stroke="#7a7a7a" stroke-width="2"/></svg>
<div class="a grp" style="left:383px;top:521px;width:1154px;height:294px;"></div>
<div class="t gt" style="left:391px;top:512px;letter-spacing:-0.47px;">Lista proforme</div>
<div class="a tb" style="left:389px;top:531px;width:1143px;height:28px;border-radius:3px"></div>
<svg style="left:402px;top:536px" width="18" height="18" viewBox="0 0 19 20"><path d="M7 1.5h5a1.5 1.5 0 0 1 1.5 1.5v3.5H17a1.5 1.5 0 0 1 1.5 1.5v4a1.5 1.5 0 0 1-1.5 1.5h-3.500V17a1.5 1.5 0 0 1-1.5 1.500h-5A1.5 1.5 0 0 1 5.500 17v-3.500H2A1.5 1.5 0 0 1 .5 12V8A1.5 1.5 0 0 1 2 6.500h3.500V3A1.5 1.5 0 0 1 7 1.500Z" fill="#6cc024" stroke="#3f8a12" stroke-width="1"/><path d="M7.500 3h4v5h5.500" fill="none" stroke="#b8ea7a" stroke-width="1.300"/></svg>
<div class="t nv" style="left:426px;top:537px;">Adauga</div>
<div class="a " style="left:391px;top:560px;width:1141px;height:250px;border:1px solid #c3d0e4;background:#fcfcfd"></div>
<div class="a " style="left:391px;top:561px;width:4px;height:33px;background:linear-gradient(90deg,#9aa5b5,#e8ecf2)"></div>
<div class="a gh2" style="left:395px;top:561px;width:1135px;height:33px;"></div>
<div class="t " style="left:396px;top:570px;color:#3b5375">Serie</div>
<div class="t r" style="left:1396px;top:570px;width:73px;color:#3b5375">Observatie</div>
<div class="a btn" style="left:389px;top:870px;width:174px;height:28px;"></div>
<div class="a btn" style="left:576px;top:870px;width:169px;height:28px;"></div>
<div class="a btn" style="left:758px;top:870px;width:161px;height:28px;"></div>
<div class="a btn" style="left:933px;top:870px;width:160px;height:28px;"></div>
<div class="t nv" style="left:467px;top:875px;">Salveaza</div>
<div class="t nv" style="left:611px;top:875px;">Confirma rezervare</div>
<div class="t nv" style="left:790px;top:875px;">Anuleaza rezervare</div>
<div class="t nv" style="left:978px;top:875px;">Adauga cazare</div>
<svg style="left:584px;top:874px" width="16" height="16" viewBox="0 0 16 16"><path d="M2 8l5 6 8-12" fill="none" stroke="#6cb71c" stroke-width="3"/></svg>
<svg style="left:763px;top:876px" width="16" height="14" viewBox="0 0 16 14"><path d="M2 2l12 10M14 2L2 12" stroke="#d02010" stroke-width="3.500"/></svg>
<svg style="left:938px;top:874px" width="24" height="18" viewBox="0 0 24 18"><rect x="6" y="4" width="14" height="12" fill="#5a9ee0"/><path d="M0 9h6v-3l5 4.500-5 4.500v-3H0z" fill="#2fb52a"/></svg>
<svg style="left:393px;top:871px" width="30" height="24" viewBox="0 0 30 24"><rect x="1" y="7" width="22" height="15" rx="2" fill="#eaf2fb" stroke="#2f7fd0" stroke-width="1.600"/><rect x="1.500" y="7.500" width="21" height="4" fill="#3b8ee0"/><rect x="4" y="14" width="9" height="1.200" fill="#9aa"/><rect x="4" y="17" width="7" height="1.200" fill="#9aa"/><path d="M9 21l2.500-6L24 2.500l3.500 3.500L15 18.500z" fill="#f5b820" stroke="#8a6a10" stroke-width=".8"/><path d="M24 2.500l1.500-1.500a2 2 0 0 1 3.500 3.500L27.500 6z" fill="#e87a9a"/><path d="M9 21l2.500-6 3.500 3.500z" fill="#f2d9b0"/><path d="M9 21l1-2.400 1.400 1.400z" fill="#333"/></svg>
<div class="a btn" style="left:1428px;top:870px;width:112px;height:28px;"></div>
<svg style="left:1434px;top:872px" width="24" height="24" viewBox="0 0 24 24"><circle cx="12" cy="12" r="10.500" fill="url(#gN)"/><circle cx="12" cy="12" r="6.200" fill="#f4dede"/><path d="M7.200 7.800L16.300 16.800" stroke="#c01010" stroke-width="3.600"/><path d="M5 7a9 9 0 0 1 10-4" stroke="#ffb0b0" stroke-width="1.500" fill="none"/></svg>
<div class="t nv" style="left:1461px;top:875px;">Renunță</div>
<div class="a glass" style="left:464px;top:145px;width:994px;height:741px;background:linear-gradient(rgba(250,250,250,.8),rgba(254,254,254,.84) 30px,#f8f8f8 40px)"></div>
<div class="t " style="left:479px;top:153px;color:#111">Adaugare plata</div>
<div class="a xbtn" style="left:1401px;top:146px;width:48px;height:19px;"></div>
<svg style="left:1418px;top:150px" width="14" height="12" viewBox="0 0 14 12"><path d="M2.200 1.500L11.800 10.500M11.800 1.500L2.200 10.500" stroke="#6a4a48" stroke-width="4.800"/><path d="M2.200 1.500L11.800 10.500M11.800 1.500L2.200 10.500" stroke="#f1f1f1" stroke-width="3"/></svg>
<div class="a dlgc" style="left:469px;top:177px;width:982px;height:705px;"></div>
<div class="a grp" style="left:476px;top:193px;width:478px;height:113px;"></div>
<div class="t gt" style="left:484px;top:184px;letter-spacing:-0.15px;">Plata se emite catre</div>
<div class="a " style="left:483px;top:212px;width:14px;height:14px;border-radius:50%;border:1px solid #3d7fd9;background:#fff;box-shadow:0 0 0 1px #b5d2f5"></div>
<div class="a " style="left:486px;top:215px;width:8px;height:8px;border-radius:50%;background:#111"></div>
<div class="a " style="left:483px;top:245px;width:14px;height:14px;border-radius:50%;border:1px solid #b4b4b4;background:#e4e4e4"></div>
<div class="a " style="left:483px;top:277px;width:14px;height:14px;border-radius:50%;border:1px solid #555;background:#fff"></div>
<div class="t " style="left:505px;top:212px;">Client:</div>
<div class="t " style="left:505px;top:243px;">Companie:</div>
<div class="t " style="left:505px;top:276px;">Agentia de turism:</div>
<div class="a cb" style="left:626px;top:203px;width:322px;height:29px;"></div>
<div class="t nv" style="left:631px;top:211px;">TEST Test</div>
<svg style="left:932px;top:215px" width="9" height="5" viewBox="0 0 9 5"><path d="M0 0H9L4.5 5Z" fill="#1e395b"/></svg>
<div class="t " style="left:633px;top:242px;color:#5a5a5a">- Nespecificat -</div>
<div class="t " style="left:633px;top:274px;color:#111">TRANZIT</div>
<div class="a grp" style="left:966px;top:193px;width:478px;height:113px;"></div>
<div class="t gt" style="left:974px;top:184px;letter-spacing:0.10px;">Informatii de plata</div>
<div class="t " style="left:977px;top:212px;">Valoare totala tranzactie:</div>
<div class="t r " style="left:1232px;width:200px;top:212px;letter-spacing:-0.48px;">101.00</div>
<div class="t " style="left:977px;top:244px;">Plati emise:</div>
<div class="t r " style="left:1232px;width:200px;top:244px;letter-spacing:-0.48px;">101.00</div>
<div class="t " style="left:977px;top:277px;">Rest de plata:</div>
<div class="t r " style="left:1232px;width:200px;top:277px;letter-spacing:-0.42px;">0.00</div>
<div class="a grp" style="left:476px;top:326px;width:968px;height:361px;"></div>
<div class="t gt" style="left:484px;top:318px;letter-spacing:-0.00px;">Detalii</div>
<div class="t r nv" style="left:378px;width:200px;top:346px;">Tip cheltuiala:</div>
<div class="a cb" style="left:584px;top:341px;width:162px;height:29px;"></div>
<div class="t nv" style="left:589px;top:348px;">Cazare 9%</div>
<svg style="left:730px;top:353px" width="9" height="5" viewBox="0 0 9 5"><path d="M0 0H9L4.5 5Z" fill="#1e395b"/></svg>
<div class="t r nv" style="left:622px;width:200px;top:346px;">Cota TVA:</div>
<div class="a cb" style="left:829px;top:341px;width:161px;height:29px;"></div>
<div class="t nv" style="left:833px;top:348px;">T.V.A. 9%</div>
<svg style="left:974px;top:353px" width="9" height="5" viewBox="0 0 9 5"><path d="M0 0H9L4.5 5Z" fill="#1e395b"/></svg>
<div class="t r nv" style="left:857px;width:200px;top:346px;">Text:</div>
<div class="a in" style="left:1063px;top:341px;width:376px;height:30px;border-color:#8e8e8e;border-radius:0"></div>
<div class="t " style="left:1067px;top:344px;color:#111">Cazare</div>
<div class="t r nv" style="left:378px;width:200px;top:380px;">Pret unitar:</div>
<div class="a in" style="left:584px;top:374px;width:162px;height:30px;"></div>
<div class="a " style="left:728px;top:375px;width:17px;height:28px;border-left:1px solid #c9d6e8;background:linear-gradient(#f6f9fd,#e9eff8);border-radius:0 2px 2px 0"></div>
<div class="a " style="left:729px;top:389px;width:16px;height:1px;background:#d3deed"></div>
<svg style="left:733px;top:381px" width="7" height="4" viewBox="0 0 7 4"><path d="M0 4H7L3.5 0Z" fill="#1e395b"/></svg>
<svg style="left:733px;top:394px" width="7" height="4" viewBox="0 0 7 4"><path d="M0 0H7L3.5 4Z" fill="#1e395b"/></svg>
<div class="t r " style="left:520px;width:200px;top:382px;color:#1e2a3a;letter-spacing:-0.42px;">0.00</div>
<div class="t r nv" style="left:622px;width:200px;top:380px;">Cantitate:</div>
<div class="a in" style="left:829px;top:374px;width:161px;height:30px;"></div>
<div class="a " style="left:972px;top:375px;width:17px;height:28px;border-left:1px solid #c9d6e8;background:linear-gradient(#f6f9fd,#e9eff8);border-radius:0 2px 2px 0"></div>
<div class="a " style="left:973px;top:389px;width:16px;height:1px;background:#d3deed"></div>
<svg style="left:977px;top:381px" width="7" height="4" viewBox="0 0 7 4"><path d="M0 4H7L3.5 0Z" fill="#1e395b"/></svg>
<svg style="left:977px;top:394px" width="7" height="4" viewBox="0 0 7 4"><path d="M0 0H7L3.5 4Z" fill="#1e395b"/></svg>
<div class="t r " style="left:765px;width:200px;top:382px;color:#1e2a3a;letter-spacing:-0.42px;">1.00</div>
<div class="t r nv" style="left:857px;width:200px;top:380px;">Valoare:</div>
<div class="a in" style="left:1063px;top:374px;width:162px;height:30px;background:#f6f7f9"></div>
<div class="a " style="left:1207px;top:375px;width:17px;height:28px;border-left:1px solid #c9d6e8;background:linear-gradient(#f6f9fd,#e9eff8);border-radius:0 2px 2px 0"></div>
<div class="a " style="left:1208px;top:389px;width:16px;height:1px;background:#d3deed"></div>
<svg style="left:1212px;top:381px" width="7" height="4" viewBox="0 0 7 4"><path d="M0 4H7L3.5 0Z" fill="#1e395b"/></svg>
<svg style="left:1212px;top:394px" width="7" height="4" viewBox="0 0 7 4"><path d="M0 0H7L3.5 4Z" fill="#1e395b"/></svg>
<div class="t r " style="left:999px;width:200px;top:382px;color:#8a8f98;letter-spacing:-0.42px;">0.00</div>
<div class="a btn" style="left:1276px;top:374px;width:124px;height:30px;"></div>
<svg style="left:1283px;top:379px" width="19" height="19" viewBox="0 0 19 20"><path d="M7 1.5h5a1.5 1.5 0 0 1 1.5 1.5v3.5H17a1.5 1.5 0 0 1 1.5 1.5v4a1.5 1.5 0 0 1-1.5 1.5h-3.500V17a1.5 1.5 0 0 1-1.5 1.500h-5A1.5 1.5 0 0 1 5.500 17v-3.500H2A1.5 1.5 0 0 1 .5 12V8A1.5 1.5 0 0 1 2 6.500h3.500V3A1.5 1.5 0 0 1 7 1.500Z" fill="#6cc024" stroke="#3f8a12" stroke-width="1"/><path d="M7.500 3h4v5h5.500" fill="none" stroke="#b8ea7a" stroke-width="1.300"/></svg>
<div class="t nv b c" style="left:1302px;top:380px;width:98px;">Adaugă</div>
<div class="a grp" style="left:487px;top:420px;width:252px;height:229px;"></div>
<div class="t gt" style="left:495px;top:410px;letter-spacing:-0.09px;">Adaugare rapida</div>
<div class="a btn" style="left:493px;top:430px;width:240px;height:27px;background:#fff;padding:0"><div class="a " style="left:2px;top:2px;width:234px;height:21px;background:#90ee90"></div>
</div>
<div class="a btn" style="left:493px;top:461px;width:240px;height:27px;border-color:#5b9be8;box-shadow:inset 0 0 0 1px #cfe2fa"></div>
<div class="a btn" style="left:493px;top:492px;width:240px;height:27px;"></div>
<div class="a btn" style="left:493px;top:523px;width:240px;height:27px;"></div>
<div class="a btn" style="left:493px;top:554px;width:240px;height:27px;background:#fff"><div class="a " style="left:1px;top:2px;width:236px;height:21px;background:#f00"></div>
</div>
<div class="t nv c" style="left:493px;top:435px;width:240px;">Adauga plan tarifar</div>
<div class="t nv c" style="left:493px;top:466px;width:240px;">Adauga taxa hoteliera</div>
<div class="t nv c" style="left:493px;top:497px;width:240px;">Adauga servicii suplimentare</div>
<div class="t nv c" style="left:493px;top:528px;width:240px;">Adauga transferuri</div>
<div class="t c" style="left:493px;top:559px;width:240px;color:#5e1f3f">Stergere toate</div>
<div class="a " style="left:744px;top:405px;width:695px;height:250px;border:1px solid #c3d0e4;background:#fcfcfd"></div>
<div class="a " style="left:745px;top:406px;width:4px;height:96px;background:linear-gradient(90deg,#9aa5b5,#e8ecf2)"></div>
<div class="a gh2" style="left:749px;top:406px;width:122px;height:33px;"></div>
<div class="t " style="left:751px;top:415px;color:#3b5375">Tip cheltuiala</div>
<div class="a gh2" style="left:871px;top:406px;width:128px;height:33px;"></div>
<div class="t " style="left:878px;top:415px;color:#3b5375">Text</div>
<div class="a gh2" style="left:999px;top:406px;width:94px;height:33px;"></div>
<div class="t " style="left:1006px;top:415px;color:#3b5375">Pret unitar</div>
<div class="a gh2" style="left:1093px;top:406px;width:93px;height:33px;"></div>
<div class="t " style="left:1100px;top:415px;color:#3b5375">Unitati</div>
<div class="a gh2" style="left:1186px;top:406px;width:100px;height:33px;"></div>
<div class="t " style="left:1193px;top:415px;color:#3b5375">Valoare</div>
<div class="a gh2" style="left:1286px;top:406px;width:148px;height:33px;"></div>
<div class="t " style="left:1293px;top:415px;color:#3b5375">Optiune stergere</div>
<div class="a gh2" style="left:1434px;top:406px;width:4px;height:33px;border-right:none"></div>
<div class="a " style="left:749px;top:439px;width:689px;height:32px;background:#fff;border-bottom:1px solid #d5e0ef"></div>
<div class="a " style="left:749px;top:471px;width:689px;height:31px;background:#f4f6fa;border-bottom:1px solid #d5e0ef"></div>
<div class="a " style="left:870px;top:439px;width:1px;height:63px;background:#d5e0ef"></div>
<div class="a " style="left:998px;top:439px;width:1px;height:63px;background:#d5e0ef"></div>
<div class="a " style="left:1092px;top:439px;width:1px;height:63px;background:#d5e0ef"></div>
<div class="a " style="left:1185px;top:439px;width:1px;height:63px;background:#d5e0ef"></div>
<div class="a " style="left:1285px;top:439px;width:1px;height:63px;background:#d5e0ef"></div>
<div class="t " style="left:751px;top:447px;color:#111">Cazare 9%</div>
<div class="t " style="left:878px;top:447px;color:#111">Cazare</div>
<div class="t r " style="left:890px;width:200px;top:447px;color:#111;letter-spacing:-0.51px;">50.00</div>
<div class="t c" style="left:1093px;top:447px;width:93px;color:#111">2 Cazare</div>
<div class="t r " style="left:1084px;width:200px;top:447px;color:#111;letter-spacing:-0.65px;">100.00</div>
<div class="t " style="left:751px;top:479px;color:#111">Taxa</div>
<div class="t " style="left:878px;top:479px;color:#111">Taxa hoteliera</div>
<div class="t r " style="left:890px;width:200px;top:479px;color:#111;letter-spacing:-0.80px;">1.00</div>
<div class="t c" style="left:1093px;top:479px;width:93px;color:#111">1 taxa</div>
<div class="t r " style="left:1084px;width:200px;top:479px;color:#111;letter-spacing:-0.80px;">1.00</div>
<div class="a btn" style="left:1294px;top:441px;width:140px;height:28px;"></div>
<svg style="left:1310px;top:446px" width="13" height="15" viewBox="0 0 13 15"><rect x="4" y="0" width="5" height="2" fill="#9dbcc4"/><rect x="0" y="1.500" width="13" height="2" rx=".8" fill="#9ab8c0"/><path d="M1.500 4h10l-.8 10.500h-8.400z" fill="#c4dde3" stroke="#8db0ba" stroke-width=".9"/><path d="M4.500 5.500v7.500M6.500 5.500v7.500M8.500 5.500v7.500" stroke="#8db0ba" stroke-width=".9"/></svg>
<div class="t nv" style="left:1355px;top:446px;">Șterge</div>
<div class="a btn" style="left:1294px;top:472px;width:140px;height:28px;"></div>
<svg style="left:1310px;top:477px" width="13" height="15" viewBox="0 0 13 15"><rect x="4" y="0" width="5" height="2" fill="#9dbcc4"/><rect x="0" y="1.500" width="13" height="2" rx=".8" fill="#9ab8c0"/><path d="M1.500 4h10l-.8 10.500h-8.400z" fill="#c4dde3" stroke="#8db0ba" stroke-width=".9"/><path d="M4.500 5.500v7.500M6.500 5.500v7.500M8.500 5.500v7.500" stroke="#8db0ba" stroke-width=".9"/></svg>
<div class="t nv" style="left:1355px;top:477px;">Șterge</div>
<div class="t nv" style="left:1299px;top:660px;">TOTAL: 101.00</div>
<div class="a grp" style="left:476px;top:709px;width:968px;height:132px;"></div>
<div class="t gt" style="left:484px;top:699px;letter-spacing:0.11px;">Metode de plata</div>
<div class="t " style="left:491px;top:730px;color:#111">Numerar:</div>
<div class="a in" style="left:567px;top:724px;width:161px;height:29px;"></div>
<div class="a " style="left:710px;top:725px;width:17px;height:27px;border-left:1px solid #c9d6e8;background:linear-gradient(#f6f9fd,#e9eff8);border-radius:0 2px 2px 0"></div>
<div class="a " style="left:711px;top:738px;width:16px;height:1px;background:#d3deed"></div>
<svg style="left:715px;top:730px" width="7" height="4" viewBox="0 0 7 4"><path d="M0 4H7L3.5 0Z" fill="#1e395b"/></svg>
<svg style="left:715px;top:743px" width="7" height="4" viewBox="0 0 7 4"><path d="M0 0H7L3.5 4Z" fill="#1e395b"/></svg>
<div class="t r " style="left:503px;width:200px;top:730px;color:#1e2a3a;letter-spacing:-0.42px;">0.00</div>
<div class="a btn" style="left:737px;top:724px;width:40px;height:29px;"></div>
<svg style="left:741px;top:728px" width="32" height="22" viewBox="0 0 32 22"><rect x="1" y="13" width="30" height="8" fill="#d9e6b8" stroke="#9aa878" stroke-width=".8"/><ellipse cx="16" cy="17" rx="4" ry="2.500" fill="#7aa05a"/><rect x="5" y="6" width="7" height="8" fill="#e6c25a" stroke="#b08a20" stroke-width=".6"/><rect x="12" y="2" width="8" height="12" fill="#f0d070" stroke="#b08a20" stroke-width=".6"/><ellipse cx="16" cy="2.500" rx="4" ry="1.500" fill="#f8e29a" stroke="#b08a20" stroke-width=".5"/></svg>
<div class="t " style="left:790px;top:730px;color:#111">Card:</div>
<div class="a in" style="left:839px;top:724px;width:161px;height:29px;"></div>
<div class="a " style="left:982px;top:725px;width:17px;height:27px;border-left:1px solid #c9d6e8;background:linear-gradient(#f6f9fd,#e9eff8);border-radius:0 2px 2px 0"></div>
<div class="a " style="left:983px;top:738px;width:16px;height:1px;background:#d3deed"></div>
<svg style="left:987px;top:730px" width="7" height="4" viewBox="0 0 7 4"><path d="M0 4H7L3.5 0Z" fill="#1e395b"/></svg>
<svg style="left:987px;top:743px" width="7" height="4" viewBox="0 0 7 4"><path d="M0 0H7L3.5 4Z" fill="#1e395b"/></svg>
<div class="t r " style="left:775px;width:200px;top:730px;color:#1e2a3a;letter-spacing:-0.42px;">0.00</div>
<div class="a btn" style="left:1009px;top:724px;width:40px;height:29px;"></div>
<svg style="left:1014px;top:729px" width="30" height="19" viewBox="0 0 30 19"><rect x=".5" y=".5" width="29" height="18" fill="#fff" stroke="#b0b4c0"/><rect x="1" y="1" width="28" height="5" fill="#2a2f9a"/><rect x="1" y="13" width="28" height="5" fill="#f0a020"/><text x="15" y="12" text-anchor="middle" font-family="Liberation Sans,sans-serif" font-weight="bold" font-style="italic" font-size="6.500" fill="#2a2f9a">VISA</text></svg>
<div class="t " style="left:1062px;top:730px;color:#111">O.P.:</div>
<div class="a in" style="left:1105px;top:724px;width:163px;height:29px;"></div>
<div class="a " style="left:1250px;top:725px;width:17px;height:27px;border-left:1px solid #c9d6e8;background:linear-gradient(#f6f9fd,#e9eff8);border-radius:0 2px 2px 0"></div>
<div class="a " style="left:1251px;top:738px;width:16px;height:1px;background:#d3deed"></div>
<svg style="left:1255px;top:730px" width="7" height="4" viewBox="0 0 7 4"><path d="M0 4H7L3.5 0Z" fill="#1e395b"/></svg>
<svg style="left:1255px;top:743px" width="7" height="4" viewBox="0 0 7 4"><path d="M0 0H7L3.5 4Z" fill="#1e395b"/></svg>
<div class="t r " style="left:1042px;width:200px;top:730px;color:#1e2a3a;letter-spacing:-0.42px;">0.00</div>
<div class="a btn" style="left:1275px;top:724px;width:40px;height:29px;"></div>
<svg style="left:1280px;top:728px" width="30" height="22" viewBox="0 0 30 22"><rect x="1" y="1" width="17" height="20" fill="#f4f4f4" stroke="#b8b8b8" stroke-width=".8"/><rect x="3" y="3" width="9" height="2.500" fill="#e05030"/><rect x="3" y="8" width="12" height="1.200" fill="#e08a7a"/><rect x="3" y="11" width="6" height="4" fill="#e05030"/><rect x="3" y="17" width="12" height="1" fill="#bbb"/><path d="M29 2L12 14l-3 3.500 4.500-1.200z" fill="#9aa4ac" stroke="#555" stroke-width=".7"/><path d="M9 17.500l3-3.500 1.500 2.300z" fill="#111"/><path d="M14 19.500h14" stroke="#999" stroke-width="1"/></svg>
<div class="a btn" style="left:1193px;top:848px;width:124px;height:29px;"></div>
<svg style="left:1198px;top:853px" width="20" height="18" viewBox="0 0 20 18"><path d="M1.500 10.500L7 16.500L18.500 2" fill="none" stroke="#6cb71c" stroke-width="3.400"/></svg>
<div class="t nv b c" style="left:1218px;top:853px;width:99px;">Salvează</div>
<div class="a btn" style="left:1321px;top:848px;width:124px;height:29px;"></div>
<svg style="left:1325px;top:850px" width="24" height="24" viewBox="0 0 24 24"><circle cx="12" cy="12" r="10.500" fill="url(#gN)"/><circle cx="12" cy="12" r="6.200" fill="#f4dede"/><path d="M7.200 7.800L16.300 16.800" stroke="#c01010" stroke-width="3.600"/><path d="M5 7a9 9 0 0 1 10-4" stroke="#ffb0b0" stroke-width="1.500" fill="none"/></svg>
<div class="t nv c" style="left:1346px;top:853px;width:99px;">Renunță</div>
</body></html>
